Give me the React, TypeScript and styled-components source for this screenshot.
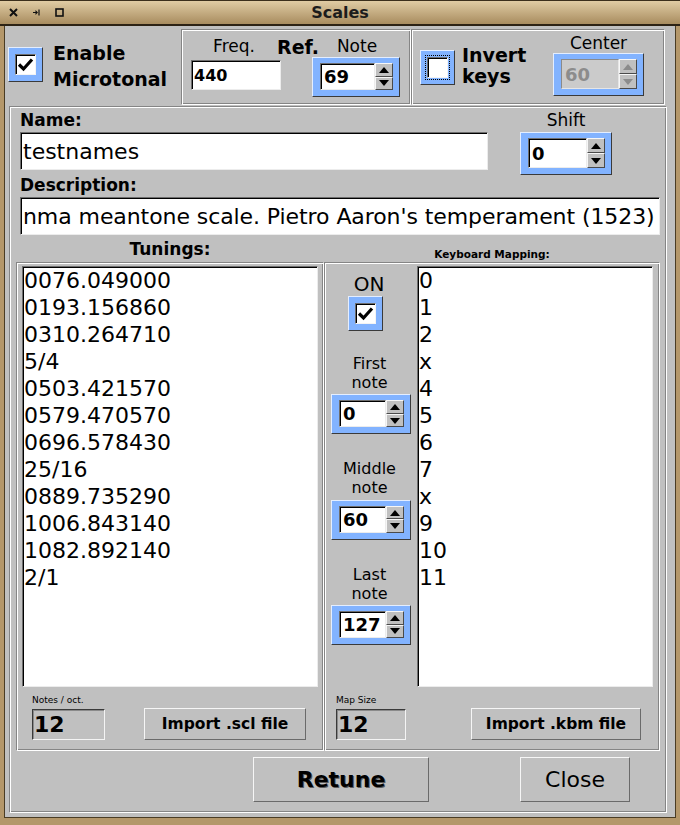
import React from 'react';
import styled, { createGlobalStyle } from 'styled-components';

const GREY = '#c0c0c0';
const BLUE = '#82b3ff';
const TAN = '#b4976a';

const Global = createGlobalStyle`
  html, body { margin: 0; padding: 0; background: ${GREY}; }
  body { font-family: "DejaVu Sans", "Noto Sans", sans-serif; color: #000; }
  * { box-sizing: border-box; }
`;

const Window = styled.div`
  width: 680px;
  height: 825px;
  display: flex;
  flex-direction: column;
  overflow: hidden;
  background: ${GREY};
`;

const TitleBar = styled.div`
  flex: none;
  height: 26px;
  display: grid;
  grid-template-columns: 1fr auto 1fr;
  align-items: center;
  background: linear-gradient(#e0cca4, #a88c5f);
  border-top: 1px solid #3b2f1c;
  border-bottom: 2px solid #2c2214;
`;

const TitleIcons = styled.div`
  display: flex;
  align-items: center;
  gap: 15px;
  padding-left: 9px;
`;

const TitleText = styled.div`
  font-size: 16px;
  font-weight: bold;
  color: #1c1c1c;
`;

const Frame = styled.div`
  flex: 1;
  display: flex;
  flex-direction: column;
  border-left: 4px solid ${TAN};
  border-right: 4px solid ${TAN};
  border-bottom: 7px solid ${TAN};
  box-shadow: inset 1px 0 0 #4a3c24, inset -1px 0 0 #4a3c24, inset 0 -1px 0 #4a3c24;
`;

const TopRow = styled.div`
  flex: none;
  height: 80px;
  display: flex;
  align-items: flex-start;
  padding-top: 3px;
`;

const EnableArea = styled.div`
  width: 177px;
  height: 76px;
  display: flex;
  align-items: center;
  gap: 10px;
  padding-left: 4px;
`;

const BigBold = styled.div<{ $lh: number }>`
  font-size: 19px;
  font-weight: bold;
  line-height: ${p => p.$lh}px;
  margin-bottom: 3px;
`;

const Group = styled.div<{ $w: number }>`
  flex: none;
  width: ${p => p.$w}px;
  height: 76px;
  border: 1px solid;
  border-color: #858585 #fff #fff #858585;
  box-shadow: inset 1px 1px 0 #fff, inset -1px -1px 0 #858585;
`;

const FreqGroupInner = styled.div`
  display: flex;
  flex-direction: column;
  padding: 6px 0 0 9px;
`;

const LabelRow = styled.div`
  display: flex;
  height: 20px;
  align-items: flex-start;
`;

const ColLabel = styled.div<{ $w: number }>`
  width: ${p => p.$w}px;
  flex: none;
  text-align: center;
  font-size: 17px;
  line-height: 20px;
  white-space: nowrap;
`;

const RefLabel = styled.div`
  width: 35px;
  flex: none;
  font-size: 19px;
  font-weight: bold;
  line-height: 20px;
  white-space: nowrap;
  margin-top: 1px;
`;

const ControlRow = styled.div`
  display: flex;
  align-items: flex-start;
  gap: 31px;
  margin-top: 1px;
`;

const TextField = styled.div<{ $w: number; $h: number; $fs: number; $bold?: boolean; $mt?: number; $ls?: number }>`
  flex: none;
  width: ${p => p.$w}px;
  height: ${p => p.$h}px;
  margin-top: ${p => p.$mt ?? 0}px;
  background: #fff;
  border: 1px solid;
  border-color: #6e6e6e #ececec #ececec #6e6e6e;
  box-shadow: inset 1px 1px 0 #000;
  display: flex;
  align-items: center;
  padding-left: 2px;
  font-size: ${p => p.$fs}px;
  font-weight: ${p => (p.$bold ? 'bold' : 'normal')};
  letter-spacing: ${p => p.$ls ?? 0}px;
  white-space: nowrap;
  overflow: hidden;
`;

const InvertGroupInner = styled.div`
  display: flex;
  height: 100%;
  padding: 0 20px 0 8px;
`;

const InvertLeft = styled.div`
  display: flex;
  align-items: center;
  gap: 7px;
`;

const CenterCol = styled.div`
  margin-left: auto;
  display: flex;
  flex-direction: column;
  align-items: center;
  padding-top: 3px;
`;

/* ---------- checkbox ---------- */
const CheckOuter = styled.div<{ $mb?: number; $mr?: number }>`
  flex: none;
  width: 35px;
  height: 35px;
  margin-bottom: ${p => p.$mb ?? 0}px;
  margin-right: ${p => p.$mr ?? 0}px;
  background: ${BLUE};
  border: 1px solid;
  border-color: #e4eeff #3a3a3a #3a3a3a #e4eeff;
  display: flex;
  align-items: center;
  justify-content: center;
`;

const CheckFocus = styled.div<{ $focus?: boolean }>`
  padding: 1px;
  outline: ${p => (p.$focus ? '1px dotted #000' : 'none')};
  outline-offset: 0px;
`;

const CheckInner = styled.div`
  width: 21px;
  height: 21px;
  background: #fff;
  border: 1px solid;
  border-color: #6e6e6e #f4f4f4 #f4f4f4 #6e6e6e;
  box-shadow: inset 1px 1px 0 #000;
  display: flex;
  align-items: center;
  justify-content: center;
`;

const Check: React.FC<{ checked?: boolean; focus?: boolean; mb?: number; mr?: number }> = ({
  checked,
  focus,
  mb,
  mr,
}) => (
  <CheckOuter $mb={mb} $mr={mr}>
    <CheckFocus $focus={focus}>
      <CheckInner>
        {checked && (
          <svg width="17" height="15" viewBox="0 0 17 15">
            <path d="M2 7.5 L6.5 12 L15 2.5" stroke="#000" strokeWidth="3.2" fill="none" strokeLinejoin="miter" />
          </svg>
        )}
      </CheckInner>
    </CheckFocus>
  </CheckOuter>
);

/* ---------- spinner ---------- */
const SpinOuter = styled.div<{ $w: number; $h: number }>`
  flex: none;
  width: ${p => p.$w}px;
  height: ${p => p.$h}px;
  background: ${BLUE};
  border: 1px solid;
  border-color: #e4eeff #3a3a3a #3a3a3a #e4eeff;
  padding: 5px 6px 6px 7px;
  display: flex;
`;

const SpinField = styled.div<{ $disabled?: boolean; $fs: number }>`
  flex: 1;
  min-width: 0;
  background: ${p => (p.$disabled ? '#cbcbcb' : '#fff')};
  color: ${p => (p.$disabled ? '#8c8c8c' : '#000')};
  border: 1px solid;
  border-color: ${p => (p.$disabled ? '#8a8a8a #e6e6e6 #e6e6e6 #8a8a8a' : '#6e6e6e #ececec #ececec #6e6e6e')};
  box-shadow: ${p => (p.$disabled ? 'none' : 'inset 1px 1px 0 #000')};
  font-size: ${p => p.$fs}px;
  font-weight: bold;
  display: flex;
  align-items: center;
  padding-left: 3px;
`;

const SpinArrows = styled.div`
  flex: none;
  width: 18px;
  display: flex;
  flex-direction: column;
`;

const SpinBtn = styled.div`
  flex: 1;
  background: ${GREY};
  border: 1px solid;
  border-color: #f6f6f6 #4a4a4a #4a4a4a #f6f6f6;
  display: flex;
  align-items: center;
  justify-content: center;
`;

const Tri: React.FC<{ up?: boolean; color: string }> = ({ up, color }) => (
  <svg width="10" height="6" viewBox="0 0 10 6">
    <path d={up ? 'M0 6 L5 0 L10 6 Z' : 'M0 0 L5 6 L10 0 Z'} fill={color} />
  </svg>
);

const Spinner: React.FC<{ w: number; h: number; value: string; fs?: number; disabled?: boolean }> = ({
  w,
  h,
  value,
  fs = 18,
  disabled,
}) => (
  <SpinOuter $w={w} $h={h}>
    <SpinField $disabled={disabled} $fs={fs}>
      {value}
    </SpinField>
    <SpinArrows>
      <SpinBtn>
        <Tri up color={disabled ? '#8c8c8c' : '#000'} />
      </SpinBtn>
      <SpinBtn>
        <Tri color={disabled ? '#8c8c8c' : '#000'} />
      </SpinBtn>
    </SpinArrows>
  </SpinOuter>
);

/* ---------- main panel ---------- */
const Panel = styled.div`
  flex: 1;
  margin: 0 0 5px 5px;
  width: 658px;
  border: 1px solid;
  border-color: #858585 #fff #fff #858585;
  box-shadow: inset 1px 1px 0 #fff, inset -1px -1px 0 #858585;
  display: flex;
  flex-direction: column;
`;

const NameRow = styled.div`
  display: flex;
  margin-top: 3px;
  padding-left: 10px;
`;

const NameCol = styled.div`
  width: 468px;
  display: flex;
  flex-direction: column;
  gap: 2px;
`;

const ShiftCol = styled.div`
  margin-left: 32px;
  width: 92px;
  display: flex;
  flex-direction: column;
  align-items: center;
  gap: 2px;
`;

const BoldLabel = styled.div`
  font-size: 17px;
  font-weight: bold;
  line-height: 20px;
  white-space: nowrap;
`;

const PlainLabel = styled.div`
  font-size: 17px;
  line-height: 20px;
  white-space: nowrap;
`;

const DescBlock = styled.div`
  display: flex;
  flex-direction: column;
  gap: 2px;
  padding-left: 10px;
`;

const HeaderRow = styled.div`
  display: flex;
  height: 20px;
  margin-top: 4px;
  padding-left: 6px;
`;

const HeaderCell = styled.div<{ $w: number }>`
  width: ${p => p.$w}px;
  flex: none;
  display: flex;
  justify-content: center;
`;

const SmallHeader = styled.div`
  font-size: 10.5px;
  font-weight: bold;
  line-height: 12px;
  align-self: flex-end;
  margin-bottom: -1px;
`;

const FramesRow = styled.div`
  display: flex;
  margin-top: 3px;
  padding-left: 6px;
  height: 489px;
`;

const SubFrame = styled.div<{ $w: number }>`
  flex: none;
  width: ${p => p.$w}px;
  height: 100%;
  border: 1px solid;
  border-color: #858585 #fff #fff #858585;
  box-shadow: inset 1px 1px 0 #fff, inset -1px -1px 0 #858585;
  display: flex;
  flex-direction: column;
`;

const ListBox = styled.div<{ $w: number; $ml: number }>`
  flex: none;
  width: ${p => p.$w}px;
  height: 421px;
  margin-left: ${p => p.$ml}px;
  background: #fff;
  border: 1px solid;
  border-color: #6e6e6e #ececec #ececec #6e6e6e;
  box-shadow: inset 1px 1px 0 #000;
  padding-left: 1px;
  font-size: 22px;
  line-height: 27px;
  overflow: hidden;
`;

const ListTop = styled.div`
  display: flex;
  margin-top: 3px;
`;

const MidCol = styled.div`
  flex: none;
  width: 80px;
  margin-left: 6px;
  display: flex;
  flex-direction: column;
  align-items: center;
  padding-top: 6px;
`;

const OnLabel = styled.div`
  font-size: 20px;
  line-height: 24px;
  margin-left: -4px;
`;

const TwoLine = styled.div<{ $mt: number }>`
  font-size: 16px;
  line-height: 18.7px;
  text-align: center;
  margin-top: ${p => p.$mt}px;
  margin-bottom: 2px;
  margin-left: -3px;
`;

const BottomRow = styled.div<{ $pl: number }>`
  display: flex;
  align-items: flex-end;
  margin-top: 8px;
  padding-left: ${p => p.$pl}px;
`;

const OutCol = styled.div`
  display: flex;
  flex-direction: column;
  gap: 3px;
`;

const TinyLabel = styled.div`
  font-size: 9px;
  line-height: 11px;
  white-space: nowrap;
`;

const OutBox = styled.div<{ $w: number }>`
  width: ${p => p.$w}px;
  height: 31px;
  border: 1px solid;
  border-color: #3a3a3a #f4f4f4 #f4f4f4 #3a3a3a;
  box-shadow: inset 1px 1px 0 #8a8a8a;
  font-size: 22px;
  font-weight: bold;
  display: flex;
  align-items: center;
  padding-left: 1px;
`;

const Button = styled.div<{ $w: number; $h: number; $fs: number; $bold?: boolean; $shadow?: boolean; $ml?: number }>`
  flex: none;
  width: ${p => p.$w}px;
  height: ${p => p.$h}px;
  margin-left: ${p => p.$ml ?? 0}px;
  background: ${GREY};
  border: 1px solid;
  border-color: #f6f6f6 #6a6a6a #6a6a6a #f6f6f6;
  display: flex;
  align-items: center;
  justify-content: center;
  font-size: ${p => p.$fs}px;
  font-weight: ${p => (p.$bold ? 'bold' : 'normal')};
  text-shadow: ${p => (p.$shadow ? '1px 1px 0 #5a5a5a' : 'none')};
  white-space: nowrap;
`;

const ButtonsRow = styled.div`
  display: flex;
  margin-top: 6px;
  padding-left: 243px;
`;

const tunings = [
  '0076.049000',
  '0193.156860',
  '0310.264710',
  '5/4',
  '0503.421570',
  '0579.470570',
  '0696.578430',
  '25/16',
  '0889.735290',
  '1006.843140',
  '1082.892140',
  '2/1',
];

const mapping = ['0', '1', '2', 'x', '4', '5', '6', '7', 'x', '9', '10', '11'];

export default function App() {
  return (
    <>
      <Global />
      <Window>
        <TitleBar>
          <TitleIcons>
            <svg width="9" height="9" viewBox="0 0 9 9">
              <path d="M1 1 L8 8 M8 1 L1 8" stroke="#111" strokeWidth="2" />
            </svg>
            <svg width="7" height="7" viewBox="0 0 7 7">
              <path d="M0 3.5 H4" stroke="#111" strokeWidth="1" />
              <path d="M2.5 1 L5 3.5 L2.5 6 Z" fill="#111" />
              <path d="M6 0.5 V6.5" stroke="#111" strokeWidth="1.2" />
            </svg>
            <svg width="9" height="9" viewBox="0 0 9 9">
              <rect x="1" y="1" width="7" height="7" stroke="#111" strokeWidth="1.6" fill="none" />
            </svg>
          </TitleIcons>
          <TitleText>Scales</TitleText>
          <span />
        </TitleBar>
        <Frame>
          <TopRow>
            <EnableArea>
              <Check checked mb={5} />
              <BigBold $lh={26}>
                Enable
                <br />
                Microtonal
              </BigBold>
            </EnableArea>
            <Group $w={230}>
              <FreqGroupInner>
                <LabelRow>
                  <ColLabel $w={86}>Freq.</ColLabel>
                  <RefLabel>Ref.</RefLabel>
                  <ColLabel $w={90}>Note</ColLabel>
                </LabelRow>
                <ControlRow>
                  <TextField $w={90} $h={30} $fs={16} $bold $mt={3}>
                    440
                  </TextField>
                  <Spinner w={88} h={40} value="69" />
                </ControlRow>
              </FreqGroupInner>
            </Group>
            <Group $w={254}>
              <InvertGroupInner>
                <InvertLeft>
                  <Check focus />
                  <BigBold $lh={21}>
                    Invert
                    <br />
                    keys
                  </BigBold>
                </InvertLeft>
                <CenterCol>
                  <PlainLabel>Center</PlainLabel>
                  <Spinner w={91} h={43} value="60" disabled />
                </CenterCol>
              </InvertGroupInner>
            </Group>
          </TopRow>
          <Panel>
            <NameRow>
              <NameCol>
                <BoldLabel>Name:</BoldLabel>
                <TextField $w={468} $h={38} $fs={22}>
                  testnames
                </TextField>
              </NameCol>
              <ShiftCol>
                <PlainLabel>Shift</PlainLabel>
                <Spinner w={92} h={43} value="0" />
              </ShiftCol>
            </NameRow>
            <DescBlock>
              <BoldLabel>Description:</BoldLabel>
              <TextField $w={640} $h={38} $fs={22} $ls={-0.08}>
                nma meantone scale. Pietro Aaron's temperament (1523)
              </TextField>
            </DescBlock>
            <HeaderRow>
              <HeaderCell $w={308}>
                <BoldLabel>Tunings:</BoldLabel>
              </HeaderCell>
              <HeaderCell $w={336}>
                <SmallHeader>Keyboard Mapping:</SmallHeader>
              </HeaderCell>
            </HeaderRow>
            <FramesRow>
              <SubFrame $w={308}>
                <ListTop>
                  <ListBox $w={296} $ml={5}>
                    {tunings.map((t, i) => (
                      <div key={i}>{t}</div>
                    ))}
                  </ListBox>
                </ListTop>
                <BottomRow $pl={15}>
                  <OutCol>
                    <TinyLabel>Notes / oct.</TinyLabel>
                    <OutBox $w={73}>12</OutBox>
                  </OutCol>
                  <Button $w={162} $h={32} $fs={15.5} $bold $ml={39}>
                    Import .scl file
                  </Button>
                </BottomRow>
              </SubFrame>
              <SubFrame $w={336}>
                <ListTop>
                  <MidCol>
                    <OnLabel>ON</OnLabel>
                    <Check checked mr={11} />
                    <TwoLine $mt={24}>
                      First
                      <br />
                      note
                    </TwoLine>
                    <Spinner w={80} h={40} value="0" />
                    <TwoLine $mt={26}>
                      Middle
                      <br />
                      note
                    </TwoLine>
                    <Spinner w={80} h={40} value="60" />
                    <TwoLine $mt={26}>
                      Last
                      <br />
                      note
                    </TwoLine>
                    <Spinner w={80} h={40} value="127" />
                  </MidCol>
                  <ListBox $w={236} $ml={6}>
                    {mapping.map((t, i) => (
                      <div key={i}>{t}</div>
                    ))}
                  </ListBox>
                </ListTop>
                <BottomRow $pl={11}>
                  <OutCol>
                    <TinyLabel>Map Size</TinyLabel>
                    <OutBox $w={70}>12</OutBox>
                  </OutCol>
                  <Button $w={170} $h={32} $fs={15.5} $bold $ml={65}>
                    Import .kbm file
                  </Button>
                </BottomRow>
              </SubFrame>
            </FramesRow>
            <ButtonsRow>
              <Button $w={176} $h={45} $fs={22} $bold $shadow>
                Retune
              </Button>
              <Button $w={110} $h={45} $fs={22} $ml={91}>
                Close
              </Button>
            </ButtonsRow>
          </Panel>
        </Frame>
      </Window>
    </>
  );
}
